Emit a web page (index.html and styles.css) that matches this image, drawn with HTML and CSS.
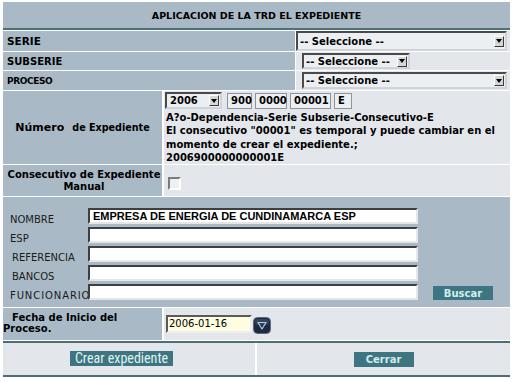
FILE: index.html
```html
<!DOCTYPE html>
<html lang="es">
<head>
<meta charset="utf-8">
<title>Aplicacion de la TRD</title>
<link rel="stylesheet" href="styles.css">
</head>
<body>
<div class="frm">
  <div class="title">APLICACION DE LA TRD EL EXPEDIENTE</div>

  <div class="r3">
    <div class="lbl l-serie">SERIE</div>
    <div class="val"><div class="sel s-serie"><span>-- Seleccione --</span><i class="arr"></i></div></div>
  </div>
  <div class="r3 r-sub">
    <div class="lbl">SUBSERIE</div>
    <div class="val"><div class="sel s-sub"><span>-- Seleccione --</span><i class="arr"></i></div></div>
  </div>
  <div class="r3 r-proc">
    <div class="lbl l-proc">PROCESO</div>
    <div class="val"><div class="sel s-proc"><span>-- Seleccione --</span><i class="arr"></i></div></div>
  </div>

  <div class="r2 r-num">
    <div class="lbl c-lbl"><span class="big">Número</span><span class="sm">de Expediente</span></div>
    <div class="val num-val">
      <div class="ctrls">
        <div class="sel s-year"><span>2006</span><i class="arr"></i></div>
        <div class="box w25">900</div>
        <div class="box w32">0000</div>
        <div class="box w41">00001</div>
        <div class="box w18">E</div>
      </div>
      <div class="note">A?o-Dependencia-Serie Subserie-Consecutivo-E<br>El consecutivo "00001" es temporal y puede cambiar en el<br>momento de crear el expediente.;<br>2006900000000001E</div>
    </div>
  </div>

  <div class="r2 r-cons">
    <div class="lbl c-lbl cons">Consecutivo de Expediente<br>Manual</div>
    <div class="val cons-val"><span class="chk"></span></div>
  </div>

  <div class="search">
    <div class="slbl">NOMBRE</div><div class="inp">EMPRESA DE ENERGIA DE CUNDINAMARCA ESP</div><div></div>
    <div class="slbl">ESP</div><div class="inp"></div><div></div>
    <div class="slbl ind">REFERENCIA</div><div class="inp"></div><div></div>
    <div class="slbl ind">BANCOS</div><div class="inp"></div><div></div>
    <div class="slbl wide">FUNCIONARIO</div><div class="inp"></div><div class="btn b-buscar">Buscar</div>
  </div>

  <div class="r2 r-fecha">
    <div class="lbl fecha">Fecha de Inicio del<br>Proceso.</div>
    <div class="val fecha-val">
      <div class="date">2006-01-16</div>
      <span class="cal"><svg width="18" height="17" viewBox="0 0 18 17"><rect x="0.5" y="0.5" width="17" height="16" rx="4" fill="#202a3e" stroke="#5d6a80"/><rect x="2" y="2" width="14" height="6" rx="3" fill="#36435c"/><path d="M5 5.5 H13 L9 12 Z" fill="none" stroke="#a9cdf0" stroke-width="1.2" stroke-linejoin="round"/></svg></span>
    </div>
  </div>

  <div class="rb">
    <div class="bcell"><div class="btn b-crear">Crear expediente</div></div>
    <div class="bcell"><div class="btn b-cerrar">Cerrar</div></div>
  </div>
</div>
</body>
</html>
```

FILE: styles.css
```css
body {
  margin: 0;
  background: #ffffff;
  font-family: "DejaVu Sans", Verdana, sans-serif;
  font-size: 10px;
  font-weight: bold;
  color: #000;
}
.frm {
  margin: 2px 0 0 3px;
  width: 507px;
  display: flex;
  flex-direction: column;
  gap: 1px;
}
.title {
  height: 26px;
  background: #a9bac6;
  border-bottom: 2px solid #4b7277;
  display: flex;
  align-items: center;
  justify-content: center;
  font-size: 9.5px;
}
.r3 {
  display: grid;
  grid-template-columns: 292px 1fr;
  column-gap: 1px;
  height: 20px;
}
.r3.r-sub { height: 18px; }
.r3.r-proc { height: 19px; }
.r2 {
  display: grid;
  grid-template-columns: 159px 1fr;
  column-gap: 2px;
}
.lbl {
  background: #a9bac6;
  display: flex;
  align-items: center;
  padding-left: 4px;
}
.l-serie { font-size: 10.5px; }
.l-proc { font-size: 9px; letter-spacing: -0.4px; }
.val {
  background: #e3e7eb;
  display: flex;
  align-items: center;
}
.sel {
  box-sizing: border-box;
  display: flex;
  align-items: center;
  background: #eceff2;
  border: 2px solid;
  border-color: #4a4a4a #d0d4d8 #d0d4d8 #4a4a4a;
  padding-left: 2px;
}
.arr {
  margin-left: auto;
  margin-right: 1px;
  width: 10px;
  height: 11px;
  box-sizing: border-box;
  border: 1px solid;
  border-color: #ffffff #3a3a3a #3a3a3a #ffffff;
  background: #d6d6d6;
  display: flex;
  align-items: center;
  justify-content: center;
}
.arr::after {
  content: "";
  border-left: 3px solid transparent;
  border-right: 3px solid transparent;
  border-top: 4px solid #000;
}
.s-serie { width: 211px; height: 20px; align-self: stretch; }
.s-sub { width: 108px; height: 16px; margin-left: 6px; }
.s-proc { width: 205px; height: 17px; margin-left: 6px; }

.r-num { height: 73px; }
.c-lbl { justify-content: center; padding-left: 0; text-align: center; }
.big { font-size: 11px; font-weight: bold; margin-right: 8px; }
.sm { font-size: 9.6px; }
.num-val {
  flex-direction: column;
  align-items: flex-start;
  padding: 1px 0 0 1px;
}
.ctrls {
  display: flex;
  align-items: center;
  gap: 3px;
  height: 17px;
}
.s-year { width: 57px; height: 17px; padding-left: 3px; margin-right: 2px; }
.box {
  box-sizing: border-box;
  height: 16px;
  border: 1px solid #8d949a;
  background: #eceff2;
  display: flex;
  align-items: center;
  padding-left: 3px;
}
.w25 { width: 25px; }
.w32 { width: 32px; }
.w41 { width: 41px; }
.w18 { width: 18px; }
.note {
  margin-top: 2px;
  padding-left: 1px;
  line-height: 13.3px;
}
.r-cons { height: 31px; }
.cons { line-height: 12px; padding-left: 3px; }
.cons-val { padding-left: 4px; padding-top: 5px; }
.chk {
  box-sizing: border-box;
  width: 13px;
  height: 13px;
  border: 2px solid;
  border-color: #7b7b7b #ffffff #ffffff #7b7b7b;
  background: #eef0f2;
}

.search {
  background: #a9bac6;
  height: 110px;
  box-sizing: border-box;
  padding: 11px 0 0 7px;
  display: grid;
  grid-template-columns: 78px 330px 75px;
  grid-auto-rows: 16px;
  row-gap: 3px;
}
.slbl {
  font-weight: normal;
  color: #1a1a1a;
  display: flex;
  align-items: flex-end;
  line-height: 12px;
  white-space: nowrap;
  overflow: hidden;
  margin-bottom: -2px;
}
.slbl.ind { padding-left: 2px; }
.slbl.wide { letter-spacing: 0.9px; }
.inp {
  box-sizing: border-box;
  background: #ffffff;
  border: 2px solid;
  border-color: #3f3f3f #e6e6e6 #e6e6e6 #3f3f3f;
  font-family: "Liberation Sans", Arial, sans-serif;
  font-size: 11px;
  font-weight: bold;
  padding-left: 3px;
  display: flex;
  align-items: center;
  white-space: nowrap;
}
.btn {
  background: #3d7581;
  color: #d4ecf0;
  display: flex;
  align-items: center;
  justify-content: center;
}
.b-buscar {
  margin-left: 15px;
  width: 60px;
  height: 14px;
  margin-top: 2px;
}
.r-fecha { height: 32px; }
.fecha {
  padding-left: 0;
  text-indent: 9px;
  line-height: 11px;
  display: block;
  padding-top: 4px;
}
.fecha-val { padding-left: 2px; gap: 1px; }
.date {
  box-sizing: border-box;
  width: 86px;
  height: 18px;
  border: 2px solid;
  border-color: #5a5a5a #eeeeee #eeeeee #5a5a5a;
  background: #fffde0;
  font-weight: normal;
  display: flex;
  align-items: center;
  padding-left: 1px;
  margin-top: -1px;
}
.cal { display: flex; margin-top: 2px; }

.rb {
  display: grid;
  grid-template-columns: 252px 1fr;
  column-gap: 2px;
  height: 32px;
  border-top: 2px solid #4f6e74;
  border-bottom: 2px solid #4f6e74;
}
.bcell {
  background: #e3e7eb;
  display: flex;
  align-items: center;
  justify-content: center;
}
.b-crear {
  width: 103px;
  height: 15px;
  margin-right: 15px;
  margin-top: -2px;
  font-family: "Liberation Sans Narrow", "Roboto Condensed", "Liberation Sans", sans-serif;
  font-weight: normal;
  font-size: 14px;
  color: #e0f2f4;
}
.b-cerrar { width: 60px; height: 15px; }
```
